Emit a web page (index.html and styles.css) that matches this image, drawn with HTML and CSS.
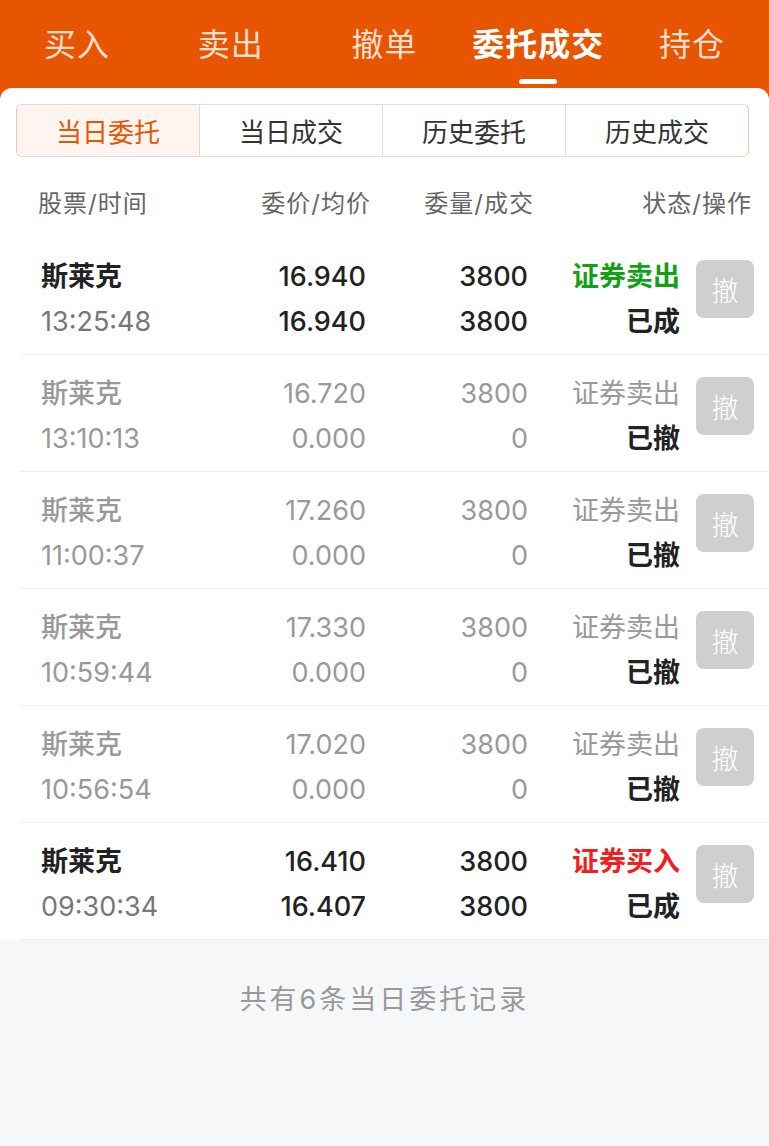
FILE: index.html
```html
<!DOCTYPE html>
<html lang="zh-CN">
<head>
<meta charset="utf-8">
<title>委托成交</title>
<link rel="stylesheet" href="styles.css">
</head>
<body>
<div class="page">
  <nav class="topbar">
    <div class="tab"><span class="tab-label">买入</span><span class="tab-bar"></span></div>
    <div class="tab"><span class="tab-label">卖出</span><span class="tab-bar"></span></div>
    <div class="tab"><span class="tab-label">撤单</span><span class="tab-bar"></span></div>
    <div class="tab active"><span class="tab-label">委托成交</span><span class="tab-bar"></span></div>
    <div class="tab"><span class="tab-label">持仓</span><span class="tab-bar"></span></div>
  </nav>

  <main class="card">
    <div class="segments">
      <div class="seg active">当日委托</div>
      <div class="seg">当日成交</div>
      <div class="seg">历史委托</div>
      <div class="seg">历史成交</div>
    </div>

    <div class="thead">
      <div class="h1">股票/时间</div>
      <div class="h2">委价/均价</div>
      <div class="h3">委量/成交</div>
      <div class="h4">状态/操作</div>
    </div>

    <div class="rows">
      <div class="row">
        <div class="c-name"><div class="name">斯莱克</div><div class="time">13:25:48</div></div>
        <div class="c-num"><div>16.940</div><div>16.940</div></div>
        <div class="c-qty"><div>3800</div><div>3800</div></div>
        <div class="c-status"><div class="sell">证券卖出</div><div class="state">已成</div></div>
        <button class="btn">撤</button>
      </div>
      <div class="row muted">
        <div class="c-name"><div class="name">斯莱克</div><div class="time">13:10:13</div></div>
        <div class="c-num"><div>16.720</div><div>0.000</div></div>
        <div class="c-qty"><div>3800</div><div>0</div></div>
        <div class="c-status"><div class="kind">证券卖出</div><div class="state">已撤</div></div>
        <button class="btn">撤</button>
      </div>
      <div class="row muted">
        <div class="c-name"><div class="name">斯莱克</div><div class="time">11:00:37</div></div>
        <div class="c-num"><div>17.260</div><div>0.000</div></div>
        <div class="c-qty"><div>3800</div><div>0</div></div>
        <div class="c-status"><div class="kind">证券卖出</div><div class="state">已撤</div></div>
        <button class="btn">撤</button>
      </div>
      <div class="row muted">
        <div class="c-name"><div class="name">斯莱克</div><div class="time">10:59:44</div></div>
        <div class="c-num"><div>17.330</div><div>0.000</div></div>
        <div class="c-qty"><div>3800</div><div>0</div></div>
        <div class="c-status"><div class="kind">证券卖出</div><div class="state">已撤</div></div>
        <button class="btn">撤</button>
      </div>
      <div class="row muted">
        <div class="c-name"><div class="name">斯莱克</div><div class="time">10:56:54</div></div>
        <div class="c-num"><div>17.020</div><div>0.000</div></div>
        <div class="c-qty"><div>3800</div><div>0</div></div>
        <div class="c-status"><div class="kind">证券卖出</div><div class="state">已撤</div></div>
        <button class="btn">撤</button>
      </div>
      <div class="row">
        <div class="c-name"><div class="name">斯莱克</div><div class="time">09:30:34</div></div>
        <div class="c-num"><div>16.410</div><div>16.407</div></div>
        <div class="c-qty"><div>3800</div><div>3800</div></div>
        <div class="c-status"><div class="buy">证券买入</div><div class="state">已成</div></div>
        <button class="btn">撤</button>
      </div>
    </div>
  </main>

  <footer class="summary">共有6条当日委托记录</footer>
</div>
</body>
</html>
```

FILE: styles.css
```css
* { box-sizing: border-box; }

html, body {
  margin: 0;
  padding: 0;
}

body {
  font-family: "Inter", "Noto Sans CJK SC", sans-serif;
  background: linear-gradient(#E85500 0, #E85500 100px, #F6F7F9 100px);
  min-height: 1146px;
  color: #222;
}

.page {
  width: 769px;
}

/* ---------- top tabs ---------- */
.topbar {
  display: flex;
  height: 88px;
}

.tab {
  flex: 1;
  display: flex;
  flex-direction: column;
  align-items: center;
  padding-top: 22px;
}

.tab-label {
  font-size: 32px;
  line-height: 46px;
  color: rgba(255, 255, 255, 0.82);
  letter-spacing: 1px;
}

.tab-bar {
  width: 38px;
  height: 5px;
  margin-top: 11px;
  border-radius: 3px;
  background: transparent;
}

.tab.active .tab-label {
  color: #fff;
  font-weight: 700;
}

.tab.active .tab-bar {
  background: #fff;
}

/* ---------- card ---------- */
.card {
  background: #fff;
  border-radius: 12px 12px 0 0;
  padding-top: 16px;
}

.segments {
  display: flex;
  height: 53px;
  margin: 0 20px 0 16px;
  border: 1px solid #dcdcdc;
  border-left-color: #efc3a8;
  border-right-color: #efc3a8;
  border-radius: 6px;
  overflow: hidden;
}

.seg {
  flex: 1;
  display: flex;
  align-items: center;
  justify-content: center;
  font-size: 26px;
  color: #333;
  border-right: 1px solid #dcdcdc;
}

.seg:last-child { border-right: none; }

.seg.active {
  background: #FFF5F0;
  color: #E85500;
}

/* ---------- table header ---------- */
.thead {
  display: flex;
  height: 81px;
  padding: 30px 0 0 38px;
  font-size: 24px;
  line-height: 34px;
  color: #666;
  letter-spacing: 1px;
}

.h1 { width: 132px; }
.h2 { width: 201px; text-align: right; }
.h3 { width: 163px; text-align: right; }
.h4 { width: 218px; text-align: right; }

/* ---------- rows ---------- */
.row {
  display: flex;
  align-items: flex-start;
  height: 117px;
  margin-left: 20px;
  padding: 16px 0 0 21px;
  border-bottom: 1px solid #eeeeee;
  font-size: 27px;
  line-height: 45px;
}

.c-name { width: 140px; }
.c-num { width: 185px; text-align: right; font-weight: 500; }
.c-qty { width: 162px; text-align: right; font-weight: 500; }
.c-status { width: 152px; text-align: right; }

.name { font-weight: 700; color: #222; }
.time { color: #777; }

.sell { color: #14A016; font-weight: 700; }
.buy { color: #EE2020; font-weight: 700; }
.kind { color: #999; }
.state { font-weight: 700; color: #222; }

.row.muted .name,
.row.muted .c-num,
.row.muted .c-qty { color: #999; }
.row.muted .time { color: #999; }
.row.muted .c-num,
.row.muted .c-qty { font-weight: 400; }
.row.muted .name { font-weight: 500; }

.btn {
  width: 58px;
  height: 58px;
  margin-left: 16px;
  margin-top: 6px;
  border: none;
  border-radius: 8px;
  background: #CFCFCF;
  color: #fff;
  font-family: "Noto Sans CJK SC", sans-serif;
  font-size: 27px;
  font-weight: 300;
  padding: 0;
}

/* ---------- footer ---------- */
.summary {
  padding-top: 40px;
  text-align: center;
  font-size: 27px;
  line-height: 40px;
  color: #999;
  letter-spacing: 3px;
}
```
